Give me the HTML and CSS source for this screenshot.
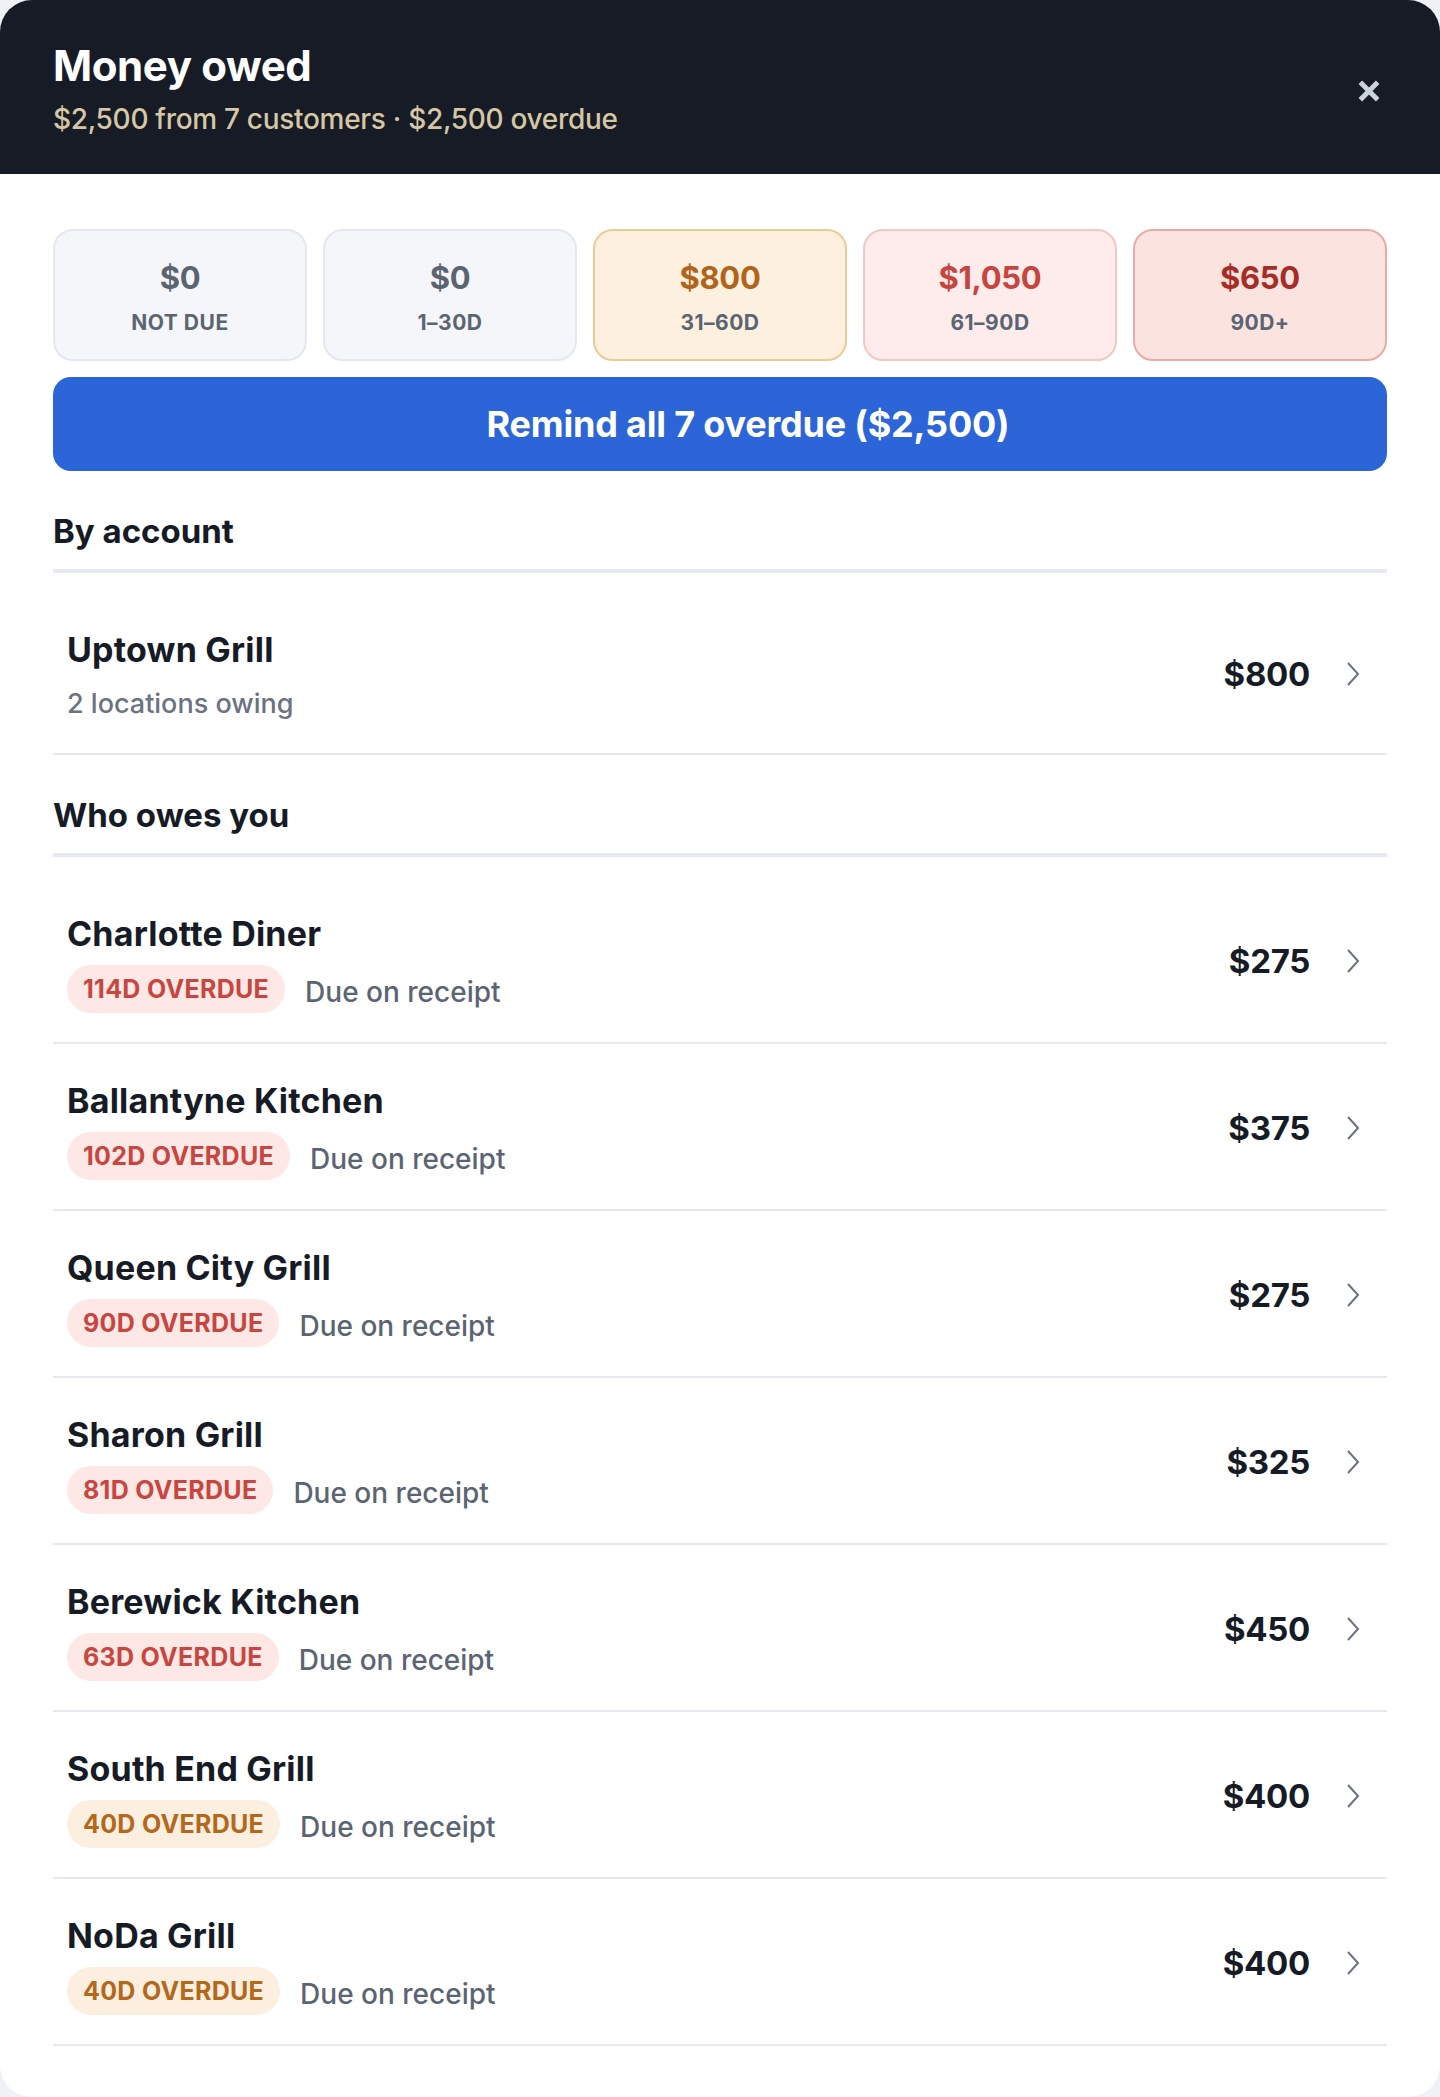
FILE: index.html
```html
<!DOCTYPE html>
<html lang="en">
<head>
<meta charset="utf-8">
<title>Money owed</title>
<link rel="stylesheet" href="styles.css">
</head>
<body>
<div class="panel">
  <header class="head">
    <div class="head-text">
      <h1 class="title">Money owed</h1>
      <p class="subtitle">$2,500 from 7 customers · $2,500 overdue</p>
    </div>
    <button class="close" aria-label="Close">
      <svg width="26" height="26" viewBox="0 0 24 24"><path d="M4 4L20 20M20 4L4 20" stroke="#cdd3dc" stroke-width="4.6" stroke-linecap="butt"/></svg>
    </button>
  </header>

  <main class="body">
    <div class="buckets">
      <div class="bucket neutral"><div class="b-amt">$0</div><div class="b-lbl">NOT DUE</div></div>
      <div class="bucket neutral"><div class="b-amt">$0</div><div class="b-lbl">1–30D</div></div>
      <div class="bucket amber"><div class="b-amt">$800</div><div class="b-lbl">31–60D</div></div>
      <div class="bucket rose"><div class="b-amt">$1,050</div><div class="b-lbl">61–90D</div></div>
      <div class="bucket red"><div class="b-amt">$650</div><div class="b-lbl">90D+</div></div>
    </div>

    <button class="remind">Remind all 7 overdue ($2,500)</button>

    <h2 class="section">By account</h2>
    <ul class="list">
      <li class="row">
        <div class="info">
          <div class="name">Uptown Grill</div>
          <div class="sub">2 locations owing</div>
        </div>
        <div class="amt">$800</div>
        <svg class="chev" width="14" height="26" viewBox="0 0 14 26"><path d="M2 2L12 13L2 24" fill="none" stroke="#6b7280" stroke-width="2"/></svg>
      </li>
    </ul>

    <h2 class="section">Who owes you</h2>
    <ul class="list">
      <li class="row">
        <div class="info">
          <div class="name">Charlotte Diner</div>
          <div class="meta"><span class="badge red">114D OVERDUE</span><span class="terms">Due on receipt</span></div>
        </div>
        <div class="amt">$275</div>
        <svg class="chev" width="14" height="26" viewBox="0 0 14 26"><path d="M2 2L12 13L2 24" fill="none" stroke="#6b7280" stroke-width="2"/></svg>
      </li>
      <li class="row">
        <div class="info">
          <div class="name">Ballantyne Kitchen</div>
          <div class="meta"><span class="badge red">102D OVERDUE</span><span class="terms">Due on receipt</span></div>
        </div>
        <div class="amt">$375</div>
        <svg class="chev" width="14" height="26" viewBox="0 0 14 26"><path d="M2 2L12 13L2 24" fill="none" stroke="#6b7280" stroke-width="2"/></svg>
      </li>
      <li class="row">
        <div class="info">
          <div class="name">Queen City Grill</div>
          <div class="meta"><span class="badge red">90D OVERDUE</span><span class="terms">Due on receipt</span></div>
        </div>
        <div class="amt">$275</div>
        <svg class="chev" width="14" height="26" viewBox="0 0 14 26"><path d="M2 2L12 13L2 24" fill="none" stroke="#6b7280" stroke-width="2"/></svg>
      </li>
      <li class="row">
        <div class="info">
          <div class="name">Sharon Grill</div>
          <div class="meta"><span class="badge red">81D OVERDUE</span><span class="terms">Due on receipt</span></div>
        </div>
        <div class="amt">$325</div>
        <svg class="chev" width="14" height="26" viewBox="0 0 14 26"><path d="M2 2L12 13L2 24" fill="none" stroke="#6b7280" stroke-width="2"/></svg>
      </li>
      <li class="row">
        <div class="info">
          <div class="name">Berewick Kitchen</div>
          <div class="meta"><span class="badge red">63D OVERDUE</span><span class="terms">Due on receipt</span></div>
        </div>
        <div class="amt">$450</div>
        <svg class="chev" width="14" height="26" viewBox="0 0 14 26"><path d="M2 2L12 13L2 24" fill="none" stroke="#6b7280" stroke-width="2"/></svg>
      </li>
      <li class="row">
        <div class="info">
          <div class="name">South End Grill</div>
          <div class="meta"><span class="badge amber">40D OVERDUE</span><span class="terms">Due on receipt</span></div>
        </div>
        <div class="amt">$400</div>
        <svg class="chev" width="14" height="26" viewBox="0 0 14 26"><path d="M2 2L12 13L2 24" fill="none" stroke="#6b7280" stroke-width="2"/></svg>
      </li>
      <li class="row">
        <div class="info">
          <div class="name">NoDa Grill</div>
          <div class="meta"><span class="badge amber">40D OVERDUE</span><span class="terms">Due on receipt</span></div>
        </div>
        <div class="amt">$400</div>
        <svg class="chev" width="14" height="26" viewBox="0 0 14 26"><path d="M2 2L12 13L2 24" fill="none" stroke="#6b7280" stroke-width="2"/></svg>
      </li>
    </ul>
  </main>
</div>
</body>
</html>
```

FILE: styles.css
```css
* { box-sizing: border-box; }

html, body {
  margin: 0;
  padding: 0;
}

body {
  background: #eef1f6;
  font-family: Inter, "Noto Sans", "Liberation Sans", sans-serif;
  color: #161b26;
}

.panel {
  width: 1440px;
  min-height: 2097px;
  background: #ffffff;
  border-radius: 32px;
  overflow: hidden;
}

.head {
  background: #161b26;
  height: 174px;
  padding: 40px 53px 0 53px;
  display: flex;
  align-items: flex-start;
  justify-content: space-between;
}

.title {
  margin: 0;
  font-size: 42px;
  line-height: 52px;
  font-weight: 700;
  color: #ffffff;
  letter-spacing: -0.4px;
}

.subtitle {
  margin: 9px 0 0 0;
  font-size: 28px;
  line-height: 36px;
  font-weight: 500;
  color: #d5c7a5;
  letter-spacing: -0.3px;
}

.close {
  margin-top: 33px;
  width: 36px;
  height: 36px;
  padding: 0;
  border: 0;
  background: transparent;
  display: flex;
  align-items: center;
  justify-content: center;
}

.body {
  padding: 55px 53px 40px 53px;
}

.buckets {
  display: grid;
  grid-template-columns: repeat(5, 1fr);
  gap: 16px;
}

.bucket {
  height: 132px;
  border-radius: 20px;
  border: 2px solid #e4e8ee;
  background: #f4f6f9;
  display: flex;
  flex-direction: column;
  align-items: center;
  justify-content: center;
  gap: 15px;
  padding-top: 4px;
}

.b-amt {
  font-size: 31px;
  line-height: 36px;
  font-weight: 700;
  color: #5b6472;
  letter-spacing: -0.3px;
}

.b-lbl {
  font-size: 21px;
  line-height: 24px;
  font-weight: 700;
  color: #5b6472;
  letter-spacing: 0.5px;
}

.bucket.amber { background: #fdf0df; border-color: #eccb92; }
.bucket.amber .b-amt { color: #b2631a; }
.bucket.rose { background: #fdeceb; border-color: #f2c7c4; }
.bucket.rose .b-amt { color: #c6453e; }
.bucket.red { background: #fbe3e0; border-color: #eaaba6; }
.bucket.red .b-amt { color: #a62c26; }

.remind {
  display: block;
  width: 100%;
  height: 94px;
  margin-top: 16px;
  padding: 0 0 0 56px;
  border: 0;
  border-radius: 18px;
  background: #2c65d8;
  color: #ffffff;
  font-family: inherit;
  font-size: 36px;
  font-weight: 700;
  letter-spacing: -0.2px;
}

.section {
  margin: 40px 0 0 0;
  padding-bottom: 18px;
  border-bottom: 4px solid #e6e9ef;
  font-size: 33px;
  line-height: 40px;
  font-weight: 700;
  color: #161b26;
  letter-spacing: 0;
}

.list {
  list-style: none;
  margin: 20px 0 0 0;
  padding: 0;
}

.row {
  display: flex;
  align-items: center;
  padding: 37px 27px 29px 14px;
  border-bottom: 2px solid #e6e9ee;
}

.info {
  flex: 1;
  display: flex;
  flex-direction: column;
}

.name {
  font-size: 34px;
  line-height: 40px;
  font-weight: 650;
  color: #161b26;
  letter-spacing: 0.2px;
}

.sub {
  margin-top: 16px;
  font-size: 27px;
  line-height: 36px;
  font-weight: 500;
  color: #6b7280;
  margin-bottom: 2px;
}

.meta {
  margin-top: 11px;
  display: flex;
  align-items: center;
  gap: 20px;
}

.badge {
  height: 48px;
  padding: 0 16px;
  border-radius: 24px;
  display: inline-flex;
  align-items: center;
  font-size: 25px;
  font-weight: 700;
  letter-spacing: 0.3px;
}

.badge.red { background: #fde8e6; color: #c7463f; }
.badge.amber { background: #fdefdf; color: #b3681c; }

.terms {
  font-size: 28px;
  line-height: 36px;
  font-weight: 500;
  color: #5b6473;
  padding-top: 6px;
}

.amt {
  font-size: 33px;
  line-height: 40px;
  font-weight: 700;
  color: #161b26;
  letter-spacing: -0.3px;
  margin-bottom: 6px;
}

.chev {
  margin-left: 36px;
  margin-bottom: 6px;
  flex: none;
}
```
